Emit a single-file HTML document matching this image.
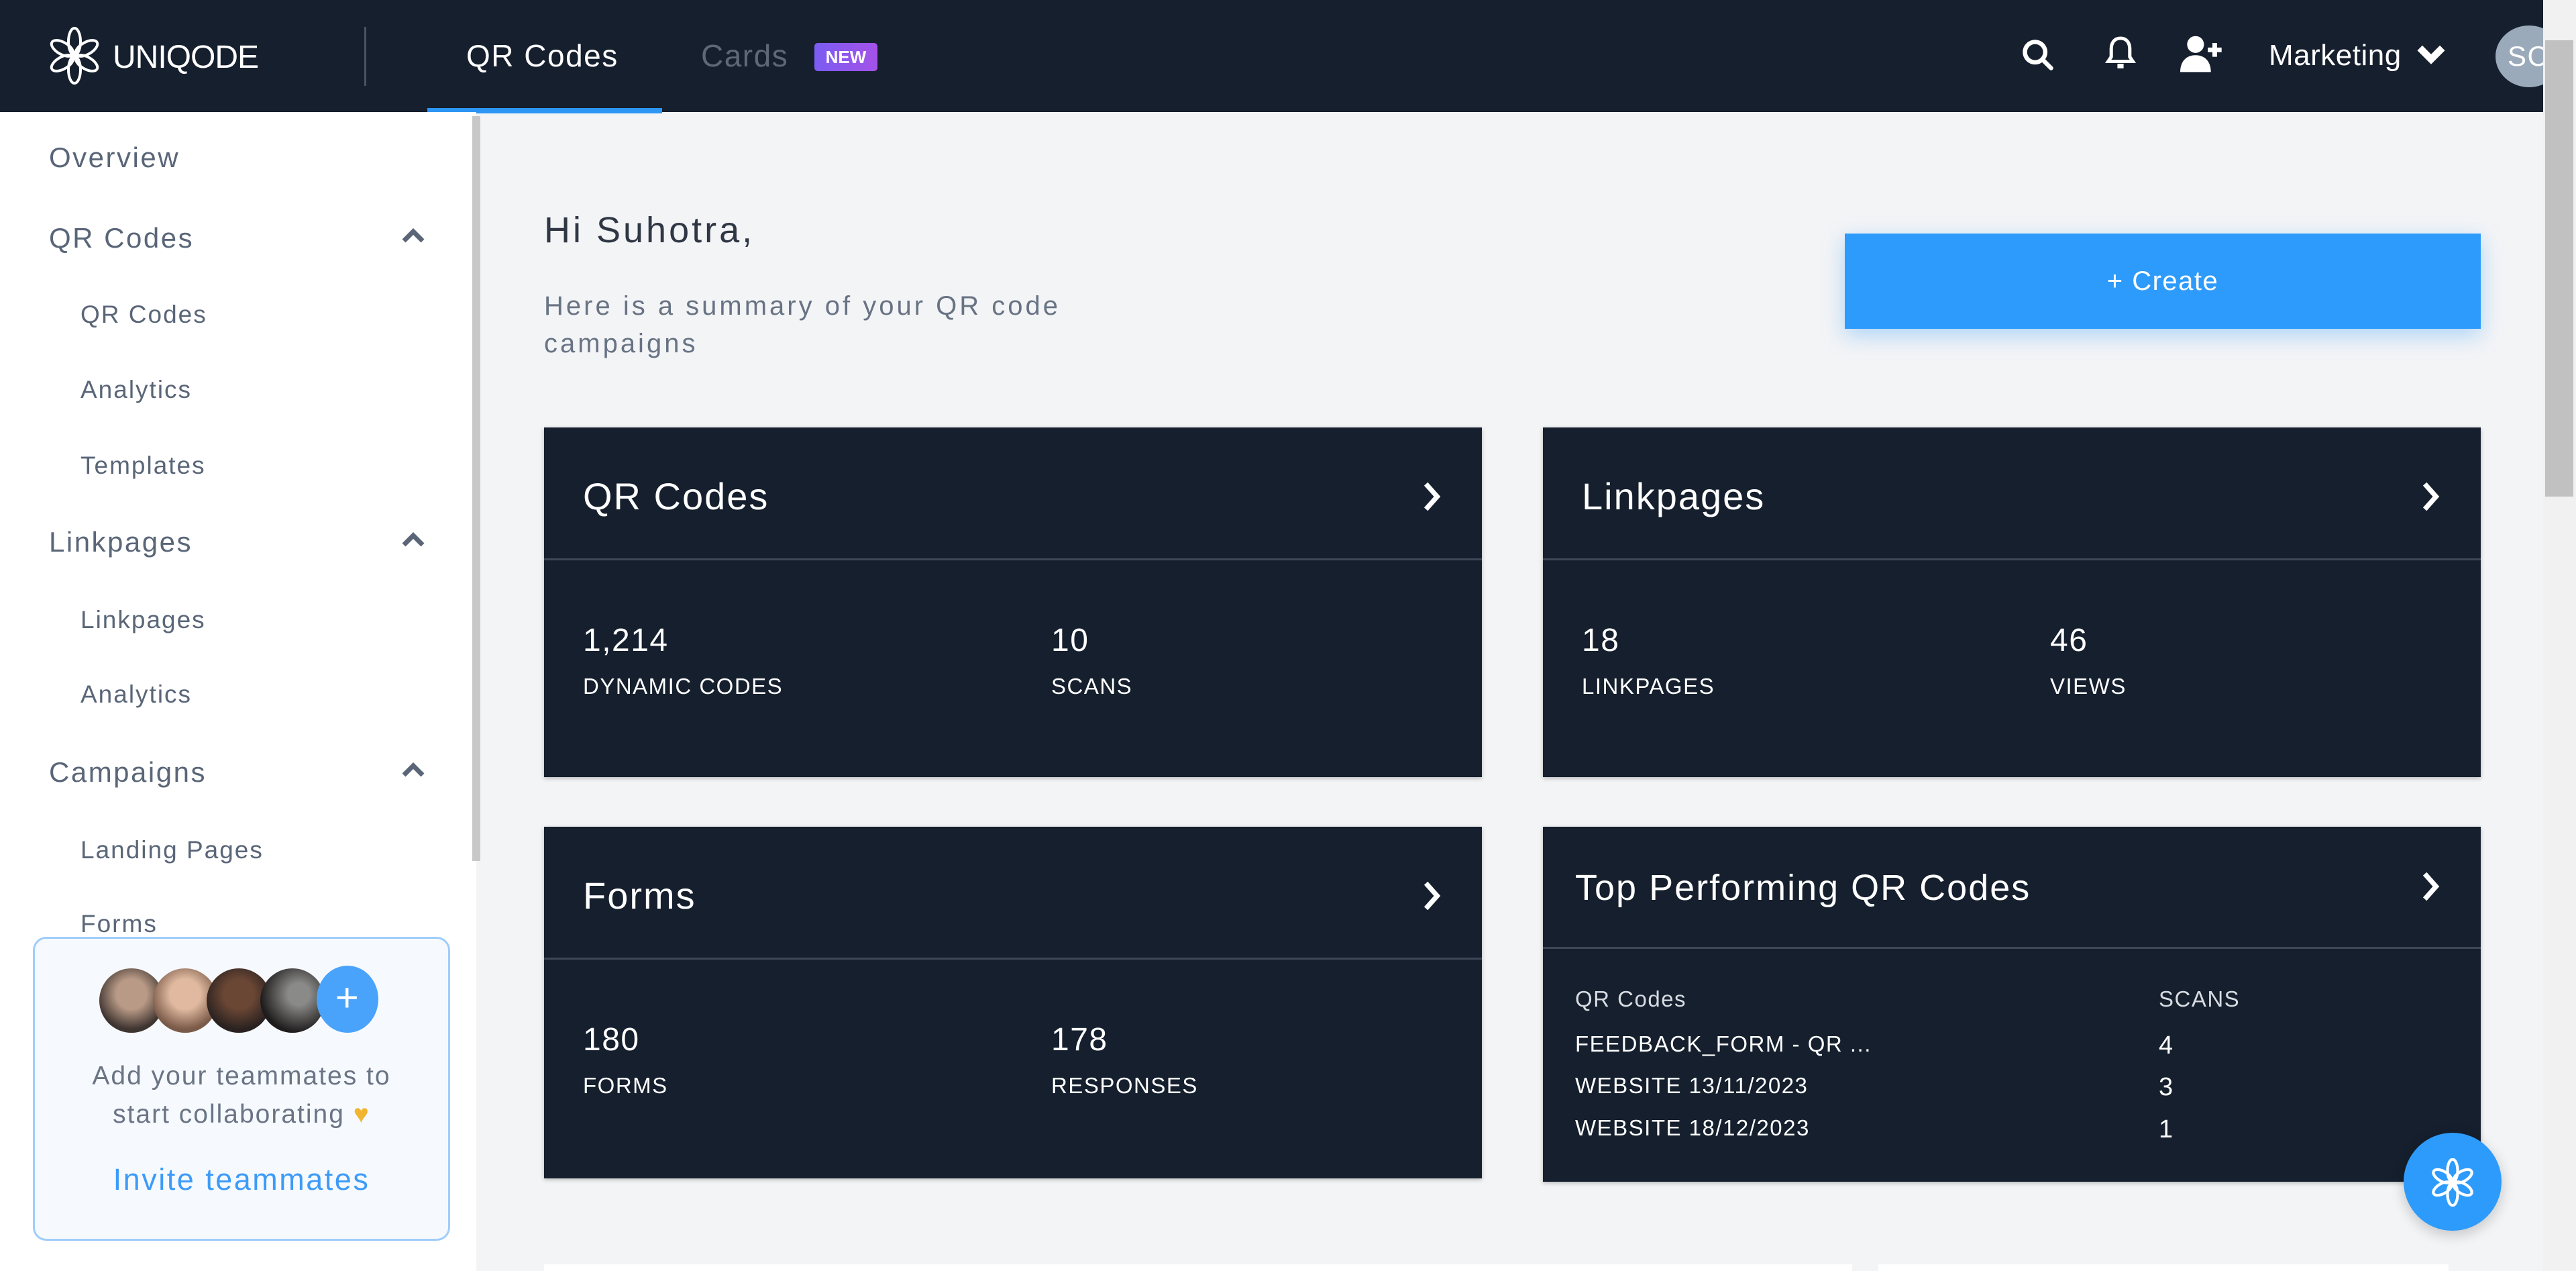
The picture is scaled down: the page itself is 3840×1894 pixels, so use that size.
<!DOCTYPE html>
<html><head><meta charset="utf-8"><style>
*{margin:0;padding:0;box-sizing:border-box}
body{width:3840px;height:1894px;overflow:hidden;background:#f3f4f6;font-family:"Liberation Sans",sans-serif;position:relative;letter-spacing:1.5px}
.a{position:absolute;white-space:nowrap}
#hdr{position:absolute;left:0;top:0;width:3791px;height:167px;background:#161f2e}
#side{position:absolute;left:0;top:167px;width:710px;height:1727px;background:#fff}
.nav{position:absolute;left:73px;font-size:42px;color:#5a6678;letter-spacing:2.5px}
.sub{position:absolute;left:120px;font-size:37px;color:#5a6678;letter-spacing:2px}
.chev{position:absolute;left:598px;width:36px;height:24px}
.card{position:absolute;background:#151f2d;box-shadow:0 2px 6px rgba(0,0,0,.25)}
.card .t{position:absolute;left:58px;color:#fff;font-size:56px;letter-spacing:2px}
.card .ln{position:absolute;left:0;right:0;height:3px;background:#3d4757}
.card .n{position:absolute;color:#fff;font-size:48px}
.card .l{position:absolute;color:#fff;font-size:33px;letter-spacing:1.5px}
.card svg.c{position:absolute;right:60px;width:30px;height:46px}
</style></head><body>
<div id="hdr">
  <svg class="a" style="left:73px;top:40px" width="76" height="86" viewBox="0 0 76 86" fill="none" stroke="#fff" stroke-width="4">
    <ellipse cx="38" cy="22" rx="9" ry="20"/><ellipse cx="38" cy="64" rx="9" ry="20"/>
    <ellipse cx="20" cy="32" rx="9" ry="18" transform="rotate(-60 20 32)"/><ellipse cx="56" cy="32" rx="9" ry="18" transform="rotate(60 56 32)"/>
    <ellipse cx="20" cy="54" rx="9" ry="18" transform="rotate(60 20 54)"/><ellipse cx="56" cy="54" rx="9" ry="18" transform="rotate(-60 56 54)"/>
  </svg>
  <div class="a" style="left:168px;top:58px;font-size:48px;color:#fff;letter-spacing:-1px">UNIQODE</div>
  <div class="a" style="left:543px;top:40px;width:3px;height:88px;background:#4a5363"></div>
  <div class="a" style="left:695px;top:56px;font-size:46px;color:#fff">QR Codes</div>
  <div class="a" style="left:637px;top:161px;width:350px;height:8px;background:#2d96f5"></div>
  <div class="a" style="left:1045px;top:56px;font-size:46px;color:#5f6876">Cards</div>
  <div class="a" style="left:1214px;top:64px;width:94px;height:42px;background:linear-gradient(90deg,#7b5cf2,#a452e8);border-radius:5px;color:#fff;font-size:26px;font-weight:bold;text-align:center;line-height:42px;letter-spacing:0">NEW</div>
  <svg class="a" style="left:3012px;top:56px" width="52" height="52" viewBox="0 0 24 24" fill="none" stroke="#fff" stroke-width="3"><circle cx="10" cy="10" r="7"/><path d="M15 15l6 6" stroke-linecap="round"/></svg>
  <svg class="a" style="left:3138px;top:52px" width="46" height="56" viewBox="0 0 20 24" fill="none" stroke="#fff" stroke-width="2.2"><path d="M10 2c-4 0-6 3-6 7v5l-2 3h16l-2-3V9c0-4-2-7-6-7z"/><path d="M8 20h4" stroke-width="3"/></svg>
  <svg class="a" style="left:3250px;top:52px" width="64" height="56" viewBox="0 0 28 24" fill="#fff"><circle cx="10" cy="6" r="5.5"/><path d="M0 24c0-7 4-11 10-11s10 4 10 11z"/><path d="M21 5h3v3h3v3h-3v3h-3v-3h-3V8h3z"/></svg>
  <div class="a" style="left:3382px;top:58px;font-size:44px;color:#fff;letter-spacing:0.5px">Marketing</div>
  <svg class="a" style="left:3603px;top:66px" width="42" height="32" viewBox="0 0 20 14" fill="none" stroke="#fff" stroke-width="5"><path d="M2 2l8 8 8-8"/></svg>
  <div class="a" style="left:3720px;top:38px;width:100px;height:92px;border-radius:50%;background:#9aaaba;color:#fff;font-size:42px;line-height:92px;padding-left:18px">SC</div>
</div>
<div class="a" style="left:3791px;top:0;width:49px;height:1894px;background:#f1f1f1"></div>
<div class="a" style="left:3794px;top:60px;width:42px;height:680px;background:#c1c1c1"></div>
<div id="side">
  <div class="nav" style="top:44px">Overview</div>
  <div class="nav" style="top:164px">QR Codes</div>
  <svg class="chev" style="top:172px" viewBox="0 0 18 12" fill="none" stroke="#5a6678" stroke-width="3.5"><path d="M2 10l7-7 7 7"/></svg>
  <div class="sub" style="top:281px">QR Codes</div>
  <div class="sub" style="top:393px">Analytics</div>
  <div class="sub" style="top:506px">Templates</div>
  <div class="nav" style="top:617px">Linkpages</div>
  <svg class="chev" style="top:625px" viewBox="0 0 18 12" fill="none" stroke="#5a6678" stroke-width="3.5"><path d="M2 10l7-7 7 7"/></svg>
  <div class="sub" style="top:736px">Linkpages</div>
  <div class="sub" style="top:847px">Analytics</div>
  <div class="nav" style="top:960px">Campaigns</div>
  <svg class="chev" style="top:968px" viewBox="0 0 18 12" fill="none" stroke="#5a6678" stroke-width="3.5"><path d="M2 10l7-7 7 7"/></svg>
  <div class="sub" style="top:1079px">Landing Pages</div>
  <div class="sub" style="top:1189px">Forms</div>
  <div class="a" style="left:704px;top:6px;width:12px;height:1110px;background:#c8c8c8"></div>
  <div class="a" style="left:49px;top:1229px;width:622px;height:453px;border:3px solid #9fcdfb;border-radius:20px;background:#f6faff">
    <div class="a" style="left:96px;top:44px;width:96px;height:96px;border-radius:50%;background:radial-gradient(circle at 50% 40%,#b99a86 30%,#3e3430 70%)"></div>
    <div class="a" style="left:176px;top:44px;width:96px;height:96px;border-radius:50%;background:radial-gradient(circle at 50% 40%,#e0b9a0 30%,#7a5a48 70%)"></div>
    <div class="a" style="left:256px;top:44px;width:96px;height:96px;border-radius:50%;background:radial-gradient(circle at 50% 40%,#6a4634 30%,#2a2220 70%)"></div>
    <div class="a" style="left:336px;top:44px;width:96px;height:96px;border-radius:50%;background:radial-gradient(circle at 60% 40%,#8a8a88 20%,#1e1c1c 70%)"></div>
    <div class="a" style="left:420px;top:40px;width:92px;height:100px;border-radius:50%;background:#4aa3fb;color:#fff;font-size:60px;text-align:center;line-height:96px">+</div>
    <div class="a" style="left:0;width:616px;top:176px;text-align:center;font-size:39px;color:#6a7484;line-height:57px;letter-spacing:2px">Add your teammates to<br>start collaborating <span style="color:#f2b530">&#x2665;</span></div>
    <div class="a" style="left:0;width:616px;top:333px;text-align:center;font-size:45px;color:#3d9bf8;letter-spacing:2.5px">Invite teammates</div>
  </div>
</div>
<div class="a" style="left:811px;top:312px;font-size:54px;color:#2f3744;letter-spacing:4px">Hi Suhotra,</div>
<div class="a" style="left:811px;top:428px;font-size:40px;color:#687384;line-height:56px;letter-spacing:4px">Here is a summary of your QR code<br>campaigns</div>
<div class="a" style="left:2750px;top:348px;width:948px;height:142px;background:#2d9bfb;box-shadow:0 10px 30px rgba(45,155,251,.35);color:#fff;font-size:40px;text-align:center;line-height:142px">+ Create</div>

<div class="card" style="left:811px;top:637px;width:1398px;height:521px">
  <div class="t" style="top:70px">QR Codes</div>
  <svg class="c" style="top:80px" viewBox="0 0 14 22" fill="none" stroke="#fff" stroke-width="3.5"><path d="M3 2l8 9-8 9"/></svg>
  <div class="ln" style="top:195px"></div>
  <div class="n" style="left:58px;top:290px">1,214</div><div class="l" style="left:58px;top:367px">DYNAMIC CODES</div>
  <div class="n" style="left:756px;top:290px">10</div><div class="l" style="left:756px;top:367px">SCANS</div>
</div>
<div class="card" style="left:2300px;top:637px;width:1398px;height:521px">
  <div class="t" style="top:70px">Linkpages</div>
  <svg class="c" style="top:80px" viewBox="0 0 14 22" fill="none" stroke="#fff" stroke-width="3.5"><path d="M3 2l8 9-8 9"/></svg>
  <div class="ln" style="top:195px"></div>
  <div class="n" style="left:58px;top:290px">18</div><div class="l" style="left:58px;top:367px">LINKPAGES</div>
  <div class="n" style="left:756px;top:290px">46</div><div class="l" style="left:756px;top:367px">VIEWS</div>
</div>
<div class="card" style="left:811px;top:1232px;width:1398px;height:524px">
  <div class="t" style="top:70px">Forms</div>
  <svg class="c" style="top:80px" viewBox="0 0 14 22" fill="none" stroke="#fff" stroke-width="3.5"><path d="M3 2l8 9-8 9"/></svg>
  <div class="ln" style="top:195px"></div>
  <div class="n" style="left:58px;top:290px">180</div><div class="l" style="left:58px;top:367px">FORMS</div>
  <div class="n" style="left:756px;top:290px">178</div><div class="l" style="left:756px;top:367px">RESPONSES</div>
</div>
<div class="card" style="left:2300px;top:1232px;width:1398px;height:529px">
  <div class="t" style="top:60px;left:48px;font-size:54px">Top Performing QR Codes</div>
  <svg class="c" style="top:66px" viewBox="0 0 14 22" fill="none" stroke="#fff" stroke-width="3.5"><path d="M3 2l8 9-8 9"/></svg>
  <div class="ln" style="top:179px"></div>
  <div class="l" style="left:48px;top:238px;color:#d8dce2">QR Codes</div><div class="l" style="left:918px;top:238px;color:#d8dce2">SCANS</div>
  <div class="l" style="left:48px;top:305px">FEEDBACK_FORM - QR ...</div><div class="l" style="left:918px;top:305px;font-size:38px">4</div>
  <div class="l" style="left:48px;top:367px">WEBSITE 13/11/2023</div><div class="l" style="left:918px;top:367px;font-size:38px">3</div>
  <div class="l" style="left:48px;top:430px">WEBSITE 18/12/2023</div><div class="l" style="left:918px;top:430px;font-size:38px">1</div>
</div>
<div class="a" style="left:811px;top:1884px;width:1950px;height:10px;background:#fff"></div>
<div class="a" style="left:2800px;top:1884px;width:850px;height:10px;background:#fff"></div>
<div class="a" style="left:3583px;top:1688px;width:146px;height:146px;border-radius:50%;background:#2d9bfb;box-shadow:0 6px 20px rgba(0,0,0,.2)">
  <svg class="a" style="left:40px;top:38px" width="66" height="72" viewBox="0 0 76 86" fill="none" stroke="#fff" stroke-width="5">
    <ellipse cx="38" cy="22" rx="9" ry="20"/><ellipse cx="38" cy="64" rx="9" ry="20"/>
    <ellipse cx="20" cy="32" rx="9" ry="18" transform="rotate(-60 20 32)"/><ellipse cx="56" cy="32" rx="9" ry="18" transform="rotate(60 56 32)"/>
    <ellipse cx="20" cy="54" rx="9" ry="18" transform="rotate(60 20 54)"/><ellipse cx="56" cy="54" rx="9" ry="18" transform="rotate(-60 56 54)"/>
  </svg>
</div>
</body></html>
